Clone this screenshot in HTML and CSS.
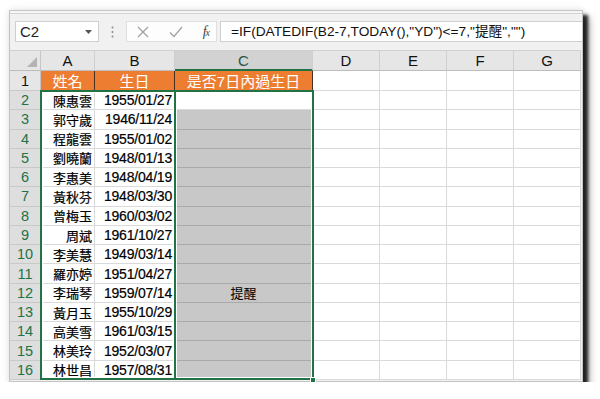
FILE: index.html
```html
<!DOCTYPE html>
<html lang="zh-Hant">
<head>
<meta charset="utf-8">
<title>Excel</title>
<link rel="stylesheet" href="styles.css">
</head>
<body>
<div class="frame">
  <div class="strip"></div>
  <div class="fbar">
    <div class="namebox"><span>C2</span><svg class="dd" width="7" height="4" viewBox="0 0 7 4"><path d="M0 0H7L3.5 4Z" fill="#555"/></svg></div>
    <svg class="dots" width="3" height="12" viewBox="0 0 3 12"><circle cx="1.5" cy="1.5" r="1" fill="#8a8a8a"/><circle cx="1.5" cy="6" r="1" fill="#8a8a8a"/><circle cx="1.5" cy="10.5" r="1" fill="#8a8a8a"/></svg>
    <div class="fbtns">
      <svg width="12" height="12" viewBox="0 0 12 12"><path d="M1 1L11 11M11 1L1 11" stroke="#a0a0a0" stroke-width="1.2"/></svg>
      <svg width="14" height="12" viewBox="0 0 14 12"><path d="M1 6.5L5 10.5L13 1" stroke="#a0a0a0" stroke-width="1.2" fill="none"/></svg>
      <span class="fx">f<span class="fxx">x</span></span>
    </div>
    <div class="finput">=IF(DATEDIF(B2-7,TODAY(),"YD")&lt;=7,"提醒","")</div>
  </div>
  <div class="sheet">
    <div class="corner"><svg width="10" height="10" viewBox="0 0 10 10"><path d="M10 0V10H0Z" fill="#b4b4b4"/></svg></div>
    <div class="ch">A</div><div class="ch">B</div><div class="ch csel">C</div><div class="ch">D</div><div class="ch">E</div><div class="ch">F</div><div class="ch">G</div>

    <div class="rh r1">1</div><div class="c or">姓名</div><div class="c or">生日</div><div class="c or">是否7日內過生日</div><div class="c"></div><div class="c"></div><div class="c"></div><div class="c"></div>

    <div class="rh">2</div><div class="c nm">陳惠雲</div><div class="c dt">1955/01/27</div><div class="c"></div><div class="c"></div><div class="c"></div><div class="c"></div><div class="c"></div>
    <div class="rh">3</div><div class="c nm">郭守歲</div><div class="c dt">1946/11/24</div><div class="c gr"></div><div class="c"></div><div class="c"></div><div class="c"></div><div class="c"></div>
    <div class="rh">4</div><div class="c nm">程龍雲</div><div class="c dt">1955/01/02</div><div class="c gr"></div><div class="c"></div><div class="c"></div><div class="c"></div><div class="c"></div>
    <div class="rh">5</div><div class="c nm">劉曉蘭</div><div class="c dt">1948/01/13</div><div class="c gr"></div><div class="c"></div><div class="c"></div><div class="c"></div><div class="c"></div>
    <div class="rh">6</div><div class="c nm">李惠美</div><div class="c dt">1948/04/19</div><div class="c gr"></div><div class="c"></div><div class="c"></div><div class="c"></div><div class="c"></div>
    <div class="rh">7</div><div class="c nm">黃秋芬</div><div class="c dt">1948/03/30</div><div class="c gr"></div><div class="c"></div><div class="c"></div><div class="c"></div><div class="c"></div>
    <div class="rh">8</div><div class="c nm">曾梅玉</div><div class="c dt">1960/03/02</div><div class="c gr"></div><div class="c"></div><div class="c"></div><div class="c"></div><div class="c"></div>
    <div class="rh">9</div><div class="c nm">周斌</div><div class="c dt">1961/10/27</div><div class="c gr"></div><div class="c"></div><div class="c"></div><div class="c"></div><div class="c"></div>
    <div class="rh">10</div><div class="c nm">李美慧</div><div class="c dt">1949/03/14</div><div class="c gr"></div><div class="c"></div><div class="c"></div><div class="c"></div><div class="c"></div>
    <div class="rh">11</div><div class="c nm">羅亦婷</div><div class="c dt">1951/04/27</div><div class="c gr"></div><div class="c"></div><div class="c"></div><div class="c"></div><div class="c"></div>
    <div class="rh">12</div><div class="c nm">李瑞琴</div><div class="c dt">1959/07/14</div><div class="c gr rm">提醒</div><div class="c"></div><div class="c"></div><div class="c"></div><div class="c"></div>
    <div class="rh">13</div><div class="c nm">黃月玉</div><div class="c dt">1955/10/29</div><div class="c gr"></div><div class="c"></div><div class="c"></div><div class="c"></div><div class="c"></div>
    <div class="rh">14</div><div class="c nm">高美雪</div><div class="c dt">1961/03/15</div><div class="c gr"></div><div class="c"></div><div class="c"></div><div class="c"></div><div class="c"></div>
    <div class="rh">15</div><div class="c nm">林美玲</div><div class="c dt">1952/03/07</div><div class="c gr"></div><div class="c"></div><div class="c"></div><div class="c"></div><div class="c"></div>
    <div class="rh">16</div><div class="c nm">林世昌</div><div class="c dt">1957/08/31</div><div class="c gr"></div><div class="c"></div><div class="c"></div><div class="c"></div><div class="c"></div>

    <div class="selbox sel-ab"></div>
    <div class="selbox sel-c"></div>
    <div class="handle"></div>
  </div>
</div>
</body>
</html>
```

FILE: styles.css
```css
* { box-sizing: border-box; }
html, body { margin: 0; padding: 0; background: #fff; }
body {
  font-family: "Liberation Sans", "Noto Sans CJK TC", sans-serif;
  color: #222;
}
.frame {
  margin: 10px 0 0 9px;
  width: 574px;
  height: 372px;
  border: 1px solid #c4c4c4;
  background: #f1f1f1;
  box-shadow: 5px 5px 3px rgba(0,0,0,0.8), 6px 7px 8px rgba(0,0,0,0.35), 0 0 7px rgba(0,0,0,0.12);
  display: flex;
  flex-direction: column;
}
.strip {
  height: 3px;
  background: #f6f6f6;
  border-bottom: 1px solid #d2d2d2;
}
.fbar {
  height: 36px;
  display: flex;
  align-items: flex-start;
  padding: 7px 0 0 5px;
}
.namebox {
  width: 84px;
  height: 21px;
  background: #fff;
  border: 1px solid #cfcfcf;
  display: flex;
  align-items: center;
  justify-content: space-between;
  padding: 0 6px 0 4px;
  font-size: 15px;
  color: #222;
}
.dots { margin: 5px 12px 0 12px; }
.fbtns {
  width: 91px;
  height: 21px;
  background: #fdfdfd;
  border: 1px solid #e0e0e0;
  display: flex;
  align-items: center;
  justify-content: space-between;
  padding: 0 7px 0 10px;
}
.fx {
  font-family: "Liberation Serif", serif;
  font-style: italic;
  font-size: 14px;
  color: #444;
  letter-spacing: -1px;
}
.fxx { font-size: 10px; }
.finput {
  margin-left: 3px;
  flex: 1;
  height: 21px;
  background: #fff;
  border: 1px solid #cfcfcf;
  border-right: none;
  padding-left: 10px;
  font-size: 13.7px;
  line-height: 19px;
  color: #111;
  white-space: nowrap;
}
.sheet {
  position: relative;
  display: grid;
  grid-template-columns: 31px 54px 80px 138px 67px 67px 67px 67px;
  grid-template-rows: 20px 20px repeat(15, 19.27px);
  background: #fff;
  width: 571px;
  border-top: 1px solid #d0d0d0;
}
.corner {
  background: #e6e6e6;
  border-right: 1px solid #c6c6c6;
  border-bottom: 1px solid #bdbdbd;
  display: flex;
  align-items: flex-end;
  justify-content: flex-end;
  padding: 0 3px 3px 0;
}
.ch {
  background: #e6e6e6;
  border-right: 1px solid #cfcfcf;
  border-bottom: 1px solid #bdbdbd;
  display: flex;
  align-items: center;
  justify-content: center;
  font-size: 15px;
  color: #111;
}
.ch.csel {
  background: #d2d2d2;
  color: #2b5540;
  border-bottom: 2px solid #217346;
}
.rh {
  background: #dedede;
  border-right: 1px solid #c4c4c4;
  border-bottom: 1px solid #c9c9c9;
  display: flex;
  align-items: center;
  justify-content: center;
  font-size: 14.5px;
  color: #217346;
}
.rh.r1 { background: #e6e6e6; color: #111; }
.c {
  border-right: 1px solid #dadada;
  border-bottom: 1px solid #dadada;
  display: flex;
  align-items: center;
  overflow: hidden;
  white-space: nowrap;
}
.or {
  background: #ed7d31;
  color: #fff;
  justify-content: center;
  font-size: 15px;
  border-right: 1px solid #4a3020;
  border-bottom: 1px solid #4a3020;
}
.nm {
  justify-content: flex-end;
  padding-right: 2px;
  font-size: 13px;
  color: #000;
  -webkit-text-stroke: 0.2px #000;
}
.dt {
  justify-content: flex-end;
  padding-right: 2px;
  font-size: 14px;
  letter-spacing: -0.2px;
  color: #000;
  -webkit-text-stroke: 0.2px #000;
}
.gr {
  background: #c8c8c8;
  border-bottom: 1px solid #a9a9a9;
}
.rm {
  justify-content: center;
  font-size: 13px;
  color: #000;
}
.selbox {
  position: absolute;
  top: 39px;
  height: 290px;
  border: 2px solid #217346;
  box-shadow: inset 0 0 0 1px #fff;
  pointer-events: none;
}
.sel-ab { left: 30px; width: 136px; }
.sel-c { left: 164px; width: 140px; }
.handle {
  position: absolute;
  left: 300px;
  top: 326px;
  width: 6px;
  height: 6px;
  background: #217346;
  border: 1px solid #fff;
}
```
